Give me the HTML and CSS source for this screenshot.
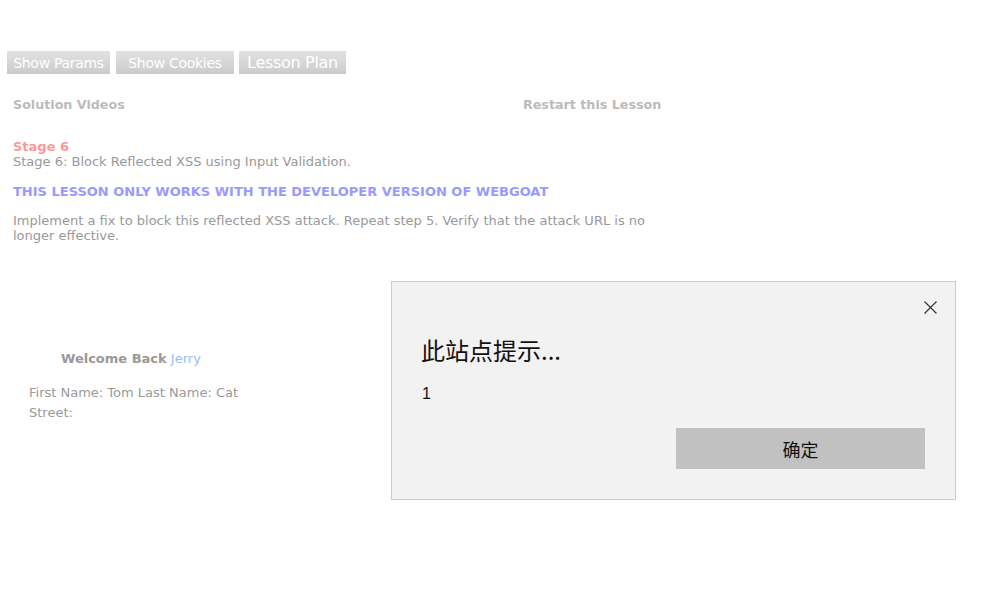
FILE: index.html
```html
<!DOCTYPE html>
<html>
<head>
<meta charset="utf-8">
<link rel="stylesheet" href="styles.css">
</head>
<body>
<div class="page">
  <div class="toolbar">
    <span class="btn b1">Show Params</span>
    <span class="btn b2">Show Cookies</span>
    <span class="btn b3">Lesson Plan</span>
  </div>
  <div class="links">
    <span class="link">Solution Videos</span>
    <span class="link">Restart this Lesson</span>
  </div>
  <div class="lesson">
    <div class="stage">Stage 6</div>
    <div class="desc">Stage 6: Block Reflected XSS using Input Validation.</div>
    <div class="warn">THIS LESSON ONLY WORKS WITH THE DEVELOPER VERSION OF WEBGOAT</div>
    <div class="desc para">Implement a fix to block this reflected XSS attack. Repeat step 5. Verify that the attack URL is no longer effective.</div>
  </div>
  <div class="welcome"><b>Welcome Back</b> <span class="user">Jerry</span></div>
  <div class="info">
    <div>First Name: Tom Last Name: Cat</div>
    <div>Street:</div>
  </div>
</div>
<div class="dialog">
  <div class="close"><svg width="13" height="13" viewBox="0 0 13 13"><path d="M0.5 0.5L12.5 12.5M12.5 0.5L0.5 12.5" stroke="#333" stroke-width="1.2" fill="none"/></svg></div>
  <div class="dtitle">此站点提示...</div>
  <div class="dmsg">1</div>
  <div class="dactions"><span class="ok">确定</span></div>
</div>
</body>
</html>
```
FILE: styles.css
```css
html, body { margin: 0; padding: 0; background: #fff; }
body { font-family: "DejaVu Sans", Verdana, sans-serif; width: 983px; height: 593px; overflow: hidden; position: relative; }
.page { padding: 51px 0 0 7px; }
.toolbar { display: flex; gap: 5px; height: 23px; }
.btn { display: flex; align-items: center; justify-content: center; height: 23px; color: #fff; font-size: 14px; background: linear-gradient(#e2e2e2, #cbcbcb); font-family: "DejaVu Sans", sans-serif; letter-spacing: -0.3px; }
.b1 { width: 103px; }
.b2 { width: 118px; margin-left: 1px; }
.b3 { width: 107px; font-size: 16px; }
.links { display: flex; padding: 23px 0 0 6px; font-size: 12.7px; line-height: 15px; font-weight: bold; color: #bbb; }
.links .link:first-child { width: 510px; }
.lesson { padding: 27px 0 0 6px; width: 650px; font-size: 13px; }
.stage { color: #f99; font-weight: bold; line-height: 15px; }
.desc { color: #999; line-height: 15px; }
.warn { color: #99f; font-weight: bold; margin-top: 15px; line-height: 15px; }
.para { margin-top: 14px; }
.welcome { padding: 108px 0 0 54px; font-size: 13px; line-height: 15px; color: #999; }
.user { color: #9bf; }
.info { padding: 17px 0 0 22px; font-size: 13px; color: #999; line-height: 20px; }
.dialog { position: absolute; left: 391px; top: 281px; width: 563px; height: 217px; background: #f2f2f2; border: 1px solid #ccc; font-family: "Noto Sans CJK SC", sans-serif; }
.close { position: absolute; right: 18px; top: 19px; width: 13px; height: 13px; line-height: 0; }
.dtitle { padding: 52px 0 0 29px; font-size: 24px; line-height: 32px; color: #111; }
.dmsg { padding: 18px 0 0 30px; font-size: 16px; line-height: 20px; color: #111; font-family: "Liberation Sans", sans-serif; }
.dactions { display: flex; justify-content: flex-end; padding: 24px 30px 0 0; }
.ok { width: 249px; height: 41px; background: #c1c1c1; display: flex; align-items: center; justify-content: center; font-size: 18px; color: #111; }
```
